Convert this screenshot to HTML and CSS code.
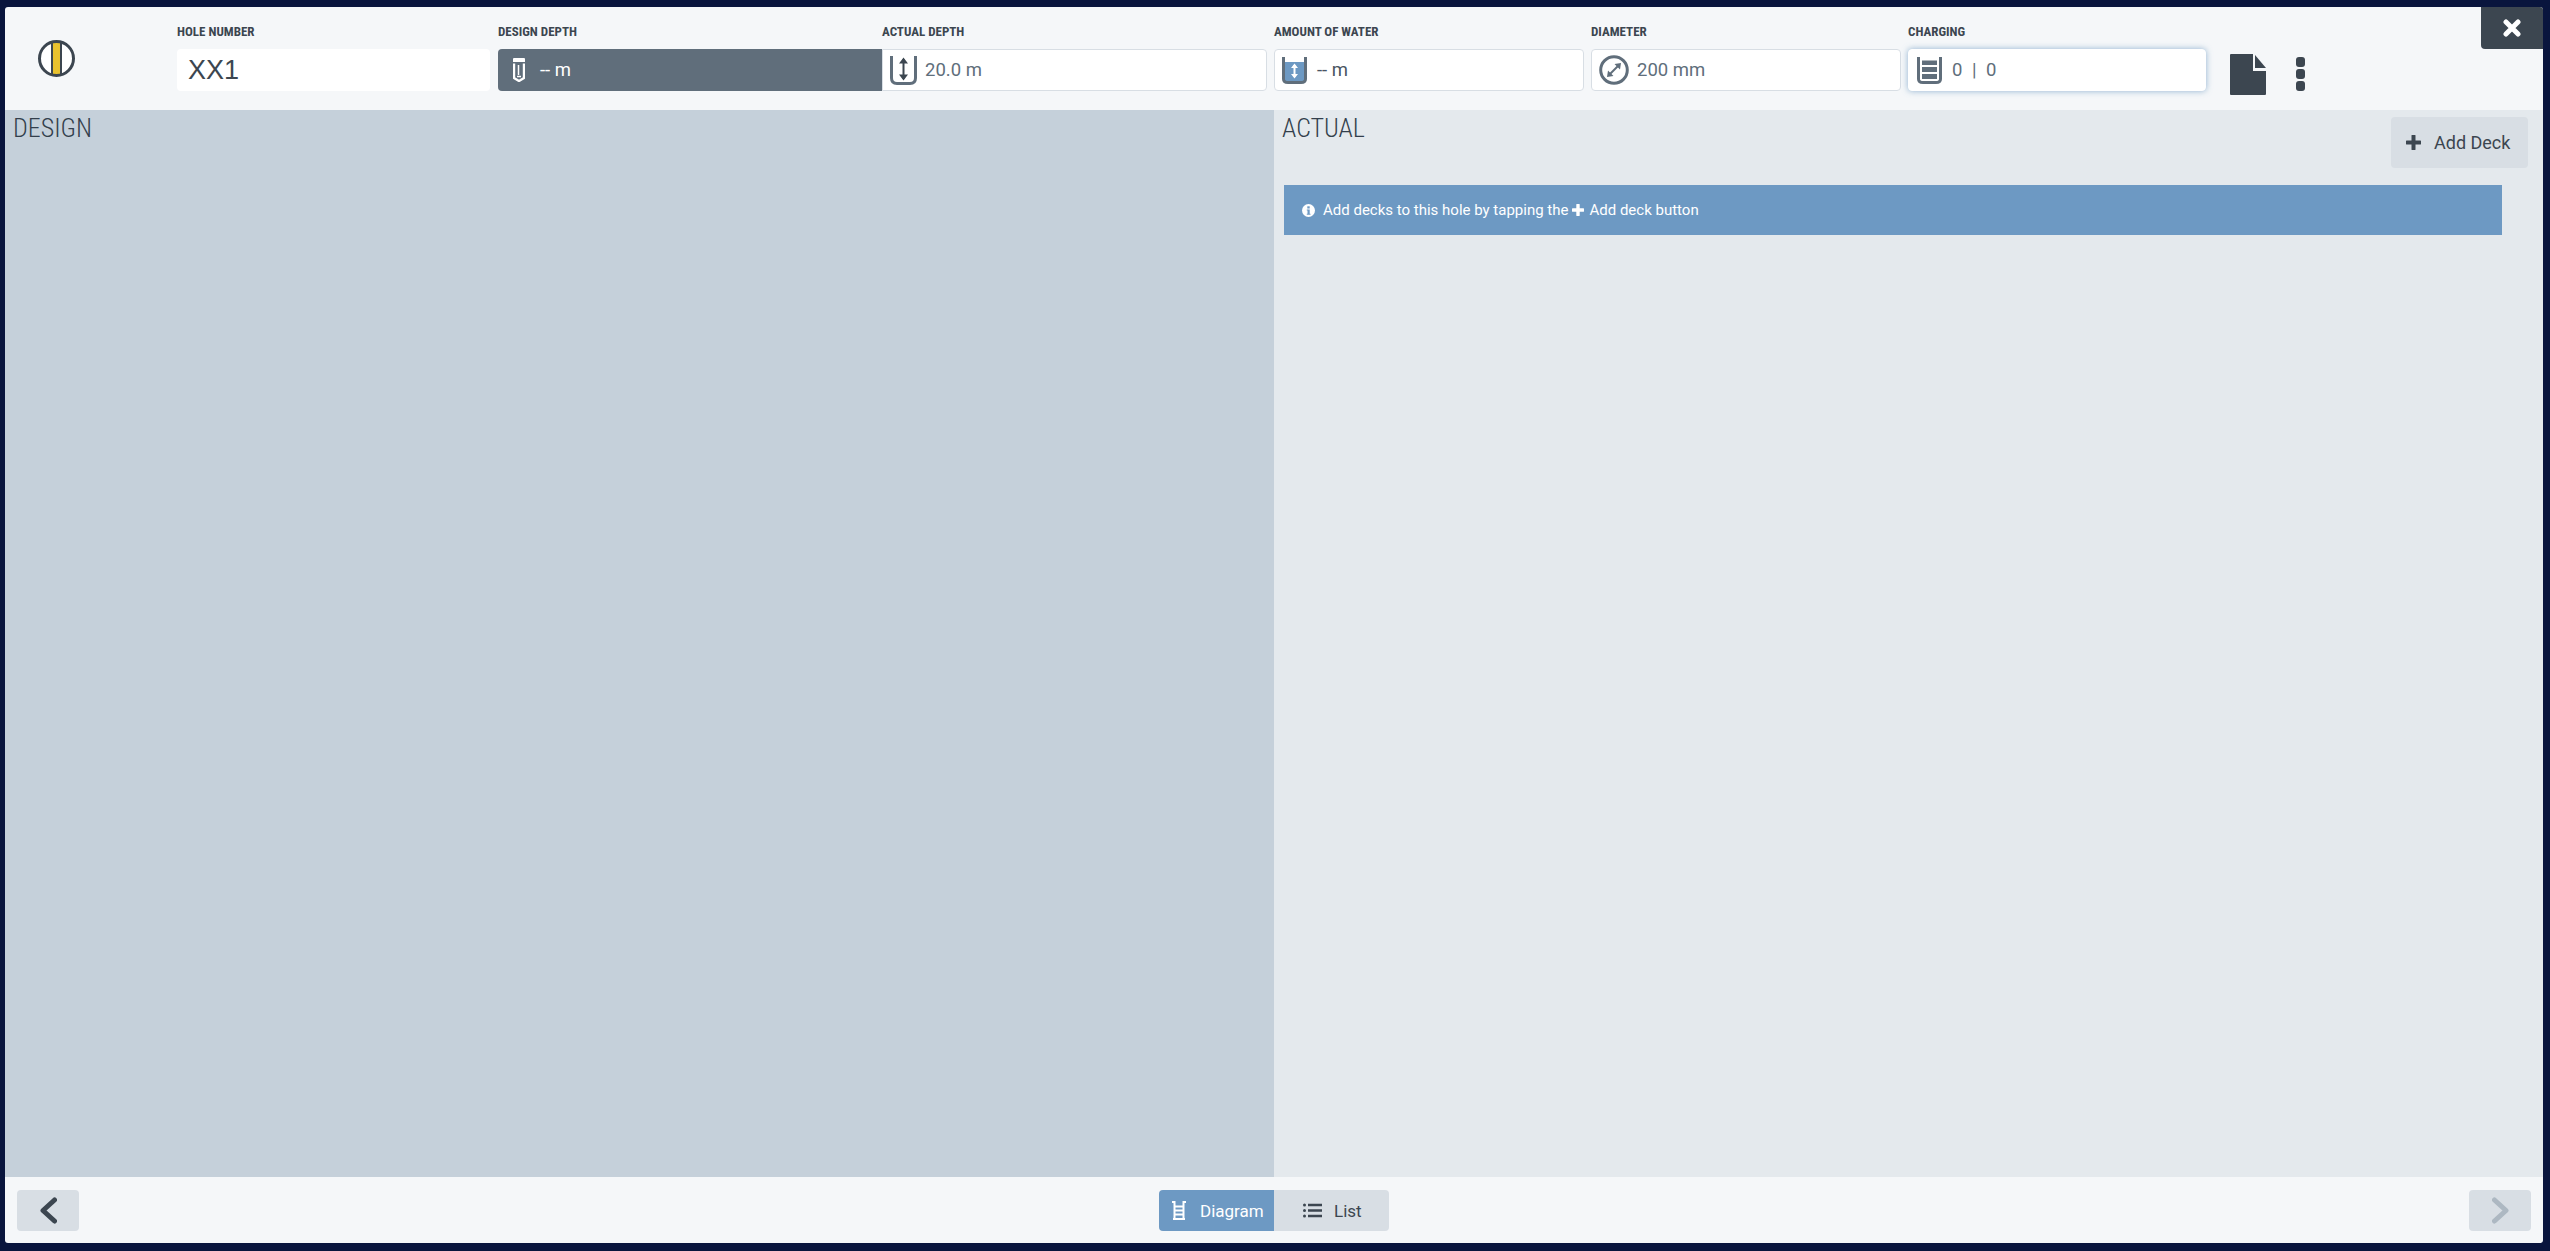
FILE: index.html
```html
<!DOCTYPE html>
<html lang="en">
<head>
<meta charset="utf-8">
<title>Hole</title>
<link rel="stylesheet" href="styles.css">
</head>
<body>
<div class="modal">
  <header class="top">
    <svg class="logo" viewBox="0 0 37 37"><circle cx="18.5" cy="18.5" r="17" fill="#fff"/><rect x="15" y="1" width="7" height="35" fill="#e9c22e"/><path d="M14 2V35M23 2V35" stroke="#3c4650" stroke-width="2" fill="none"/><circle cx="18.5" cy="18.5" r="17" fill="none" stroke="#3c4650" stroke-width="3"/></svg>
    <div class="field f-hole">
      <label class="lbl">HOLE NUMBER</label>
      <div class="box box-hole">XX1</div>
    </div>
    <div class="field f-design">
      <label class="lbl">DESIGN DEPTH</label>
      <div class="box box-design">
        <svg class="ic-pencil" viewBox="0 0 12 24"><path d="M1 0H11Q12 0 12 1V4H0V1Q0 0 1 0Z" fill="#fff"/><path d="M1 5.5V20L6 23L11 20V5.5" fill="none" stroke="#fff" stroke-width="2.4"/><path d="M5.5 7V17" stroke="#fff" stroke-width="1.5"/><path d="M4 18.5H8" stroke="#fff" stroke-width="1.5"/></svg>
        <span>-- m</span>
      </div>
    </div>
    <div class="field f-actual">
      <label class="lbl">ACTUAL DEPTH</label>
      <div class="box box-actual">
        <svg class="ic-bucket" viewBox="0 0 27 29"><path d="M1.5 0V22Q1.5 27.500 7 27.500H20Q25.500 27.500 25.500 22V0" fill="none" stroke="#606e7b" stroke-width="3"/><path d="M13.500 3V23" stroke="#3c4650" stroke-width="2"/><path d="M13.500 1.500L18 7.500H9ZM13.500 24.500L18 18.500H9Z" fill="#3c4650"/></svg>
        <span>20.0 m</span>
      </div>
    </div>
    <div class="field f-water">
      <label class="lbl">AMOUNT OF WATER</label>
      <div class="box box-water">
        <svg class="ic-water" viewBox="0 0 25 27"><rect x="2" y="5" width="21" height="19" fill="#6d99c3"/><path d="M1.500 0V22Q1.500 25.500 6 25.500H19Q23.500 25.500 23.500 22V0" fill="none" stroke="#606e7b" stroke-width="3"/><path d="M12.500 8V20" stroke="#fff" stroke-width="2"/><path d="M12.500 6.500L16 11H9ZM12.500 21.500L16 17H9Z" fill="#fff"/></svg>
        <span>-- m</span>
      </div>
    </div>
    <div class="field f-diam">
      <label class="lbl">DIAMETER</label>
      <div class="box">
        <svg class="ic-diam" viewBox="0 0 30 30"><circle cx="15" cy="15" r="13.300" fill="none" stroke="#606e7b" stroke-width="3"/><path d="M10 20L20 10" stroke="#606e7b" stroke-width="2"/><path d="M22 8L21 14.500L15.500 9ZM8 22L9 15.500L14.500 21Z" fill="#606e7b"/></svg>
        <span>200 mm</span>
      </div>
    </div>
    <div class="field f-charge">
      <label class="lbl">CHARGING</label>
      <div class="box box-focus">
        <svg class="ic-charge" viewBox="0 0 25 27"><path d="M1.500 0V22Q1.500 25.500 6 25.500H19Q23.500 25.500 23.500 22V0" fill="none" stroke="#606e7b" stroke-width="3"/><path d="M5 3.500H20V8H5ZM5 10H20V15H5ZM5 17H20V22H5Z" fill="#606e7b"/></svg>
        <span class="charge-val">0 <i class="sep">|</i> 0</span>
      </div>
    </div>
    <svg class="ic-file" viewBox="0 0 36 41"><path d="M0 1Q0 0 1 0H23V17H36V40Q36 41 35 41H1Q0 41 0 40Z" fill="#3c4650"/><path d="M25 1L36 14H25Z" fill="#3c4650"/></svg>
    <div class="dots"><i></i><i></i><i></i></div>
    <button class="close"><svg viewBox="0 0 18 18"><path d="M3 3L15 15M15 3L3 15" stroke="#fff" stroke-width="5" stroke-linecap="round" fill="none"/></svg></button>
  </header>
  <main class="panels">
    <section class="panel design"><h2 class="ptitle">DESIGN</h2></section>
    <section class="panel actual">
      <div class="actual-head">
        <h2 class="ptitle">ACTUAL</h2>
        <button class="add"><svg viewBox="0 0 15 15"><path d="M7.500 1V14M1 7.500H14" stroke="#3c4650" stroke-width="4" stroke-linecap="round" fill="none"/></svg>Add Deck</button>
      </div>
      <div class="banner">
        <svg class="ic-info" viewBox="0 0 13 13"><circle cx="6.500" cy="6.500" r="6.500" fill="#fff"/><rect x="5.300" y="2.300" width="2.400" height="2.200" fill="#6d99c3"/><path d="M4.800 5.500H7.700V9.700H8.500V10.800H4.800V9.700H5.500V6.600H4.800Z" fill="#6d99c3"/></svg>
        <span>Add decks to this hole by tapping the</span>
        <svg class="ic-plus" viewBox="0 0 12 12"><path d="M6 1V11M1 6H11" stroke="#fff" stroke-width="3.400" stroke-linecap="round" fill="none"/></svg>
        <span>Add deck button</span>
      </div>
    </section>
  </main>
  <footer class="bottom">
    <button class="nav"><svg viewBox="0 0 17 27"><path d="M14.500 3L3 13.500L14.500 24" stroke="#3c4650" stroke-width="5" stroke-linecap="round" stroke-linejoin="round" fill="none"/></svg></button>
    <div class="toggle">
      <button class="tg tg-on"><svg class="ic-ladder" viewBox="0 0 14 19"><path d="M2.500 0V18M11.500 0V18" stroke="#fff" stroke-width="2" fill="none"/><path d="M0 1H3M11 1H14M2.500 5.500H11.500M2.500 9.500H11.500M2.500 13.500H11.500M1 18H13" stroke="#fff" stroke-width="2" fill="none"/></svg>Diagram</button>
      <button class="tg"><svg class="ic-list" viewBox="0 0 19 15"><path d="M5 2H19M5 7.500H19M5 13H19" stroke="#3c4650" stroke-width="2.500" fill="none"/><circle cx="1.500" cy="2" r="1.500" fill="#3c4650"/><circle cx="1.500" cy="7.500" r="1.500" fill="#3c4650"/><circle cx="1.500" cy="13" r="1.500" fill="#3c4650"/></svg>List</button>
    </div>
    <button class="nav nav-off"><svg viewBox="0 0 17 27"><path d="M2.500 3L14 13.500L2.500 24" stroke="#adb8c2" stroke-width="5" stroke-linecap="round" stroke-linejoin="round" fill="none"/></svg></button>
  </footer>
</div>
</body>
</html>
```

FILE: styles.css
```css
* { box-sizing: border-box; }
html, body { margin: 0; height: 100%; }
body {
  background: #09153d;
  padding: 7px 7px 8px 5px;
  font-family: Roboto, "Liberation Sans", sans-serif;
  color: #3c4650;
  overflow: hidden;
}
button { font-family: inherit; border: 0; padding: 0; cursor: pointer; }
svg { display: block; flex: none; }

.modal {
  position: relative;
  height: 100%;
  display: flex;
  flex-direction: column;
  background: #f5f7f9;
  border-radius: 3px;
  overflow: hidden;
}

/* header */
.top {
  position: relative;
  flex: none;
  height: 103px;
  display: flex;
  align-items: flex-start;
  padding: 18px 0 0 33px;
}
.logo { width: 37px; height: 37px; margin: 15px 102px 0 0; }
.field { display: flex; flex-direction: column; flex: none; }
.lbl {
  height: 13px;
  margin-bottom: 11px;
  font-family: "Roboto Condensed", Roboto, sans-serif;
  font-stretch: 75%;
  font-size: 13px;
  line-height: 13px;
  font-weight: 700;
  color: #3c4650;
  white-space: nowrap;
}
.box {
  height: 42px;
  display: flex;
  align-items: center;
  padding-left: 7px;
  background: #fff;
  border: 1px solid #d8dee4;
  border-radius: 4px;
  font-size: 18.500px;
  color: #606e7b;
}
.f-hole { width: 313px; margin-right: 8px; }
.f-design { width: 384px; }
.f-actual { width: 385px; margin-right: 7px; }
.f-water { width: 310px; margin-right: 7px; }
.f-diam { width: 310px; margin-right: 7px; }
.f-charge { width: 298px; margin-right: 24px; }

.box-hole {
  border: 0;
  padding-left: 11px;
  font-family: "Liberation Sans", Arial, sans-serif;
  font-size: 27px;
  color: #3c4650;
}
.box-design {
  border: 0;
  border-radius: 4px 0 0 4px;
  background: #606e7b;
  color: #fff;
  padding-left: 15px;
}
.box-actual { border-radius: 0 4px 4px 0; }
.box-water { color: #4a5562; }
.box-focus { border-color: #fff; box-shadow: 0 0 6px rgba(109, 153, 195, .75); padding-left: 8px; }

.ic-pencil { width: 12px; height: 24px; margin-right: 15px; }
.ic-bucket { width: 27px; height: 29px; margin: 0 8px 0 0; }
.ic-water { width: 25px; height: 27px; margin-right: 10px; }
.ic-diam { width: 30px; height: 30px; margin-right: 8px; }
.ic-charge { width: 25px; height: 27px; margin-right: 10px; }
.charge-val { word-spacing: 5px; }
.sep { font-style: normal; }

.ic-file { width: 36px; height: 41px; margin: 29px 30px 0 0; }
.dots { display: flex; flex-direction: column; gap: 2px; margin-top: 32px; }
.dots i { display: block; width: 9px; height: 10px; border-radius: 3px; background: #3c4650; }

.close {
  position: absolute;
  top: 0;
  right: 0;
  width: 62px;
  height: 42px;
  display: flex;
  align-items: center;
  justify-content: center;
  background: #3c4650;
  border-radius: 0 0 0 4px;
}
.close svg { width: 18px; height: 18px; }

/* panels */
.panels { flex: 1; display: flex; min-height: 0; }
.panel { min-width: 0; }
.design { width: 1269px; flex: none; background: #c5d0da; padding: 5px 0 0 8px; }
.actual { flex: 1; background: #e4e9ed; padding: 7px 15px 0 8px; }
.ptitle {
  margin: 0;
  font-family: "Roboto Condensed", Roboto, sans-serif;
  font-stretch: 75%;
  font-size: 26px;
  line-height: 26px;
  font-weight: 300;
  color: #333f4c;
}
.actual .ptitle { margin-top: -2px; }
.actual-head { display: flex; justify-content: space-between; align-items: flex-start; height: 68px; }
.add {
  width: 137px;
  height: 51px;
  display: flex;
  align-items: center;
  padding-left: 15px;
  gap: 13px;
  background: #d8dee4;
  border-radius: 4px;
  font-size: 18px;
  color: #3c4650;
}
.add svg { width: 15px; height: 15px; }
.banner {
  width: 1218px;
  margin-left: 2px;
  height: 50px;
  display: flex;
  align-items: center;
  padding-left: 18px;
  background: #6d99c3;
  color: #fff;
  font-size: 15px;
  font-weight: 400;
}
.ic-info { width: 13px; height: 13px; margin-right: 8px; }
.ic-plus { width: 12px; height: 12px; margin: 0 5px 0 4px; }

/* footer */
.bottom {
  flex: none;
  height: 66px;
  display: flex;
  justify-content: space-between;
  align-items: flex-start;
  padding: 13px 12px 0;
}
.nav {
  width: 62px;
  height: 41px;
  display: flex;
  align-items: center;
  justify-content: center;
  background: #d8dee4;
  border-radius: 4px;
}
.nav svg { width: 17px; height: 27px; }
.toggle { display: flex; }
.tg {
  width: 115px;
  height: 41px;
  display: flex;
  align-items: center;
  background: #d8dee4;
  color: #3c4650;
  font-size: 17px;
  font-weight: 400;
  border-radius: 0 4px 4px 0;
  padding-left: 29px;
  gap: 12px;
}
.tg-on {
  background: #6d99c3;
  color: #fff;
  border-radius: 4px 0 0 4px;
  padding-left: 13px;
  gap: 14px;
}
.ic-ladder { width: 14px; height: 19px; }
.ic-list { width: 19px; height: 15px; }
```
